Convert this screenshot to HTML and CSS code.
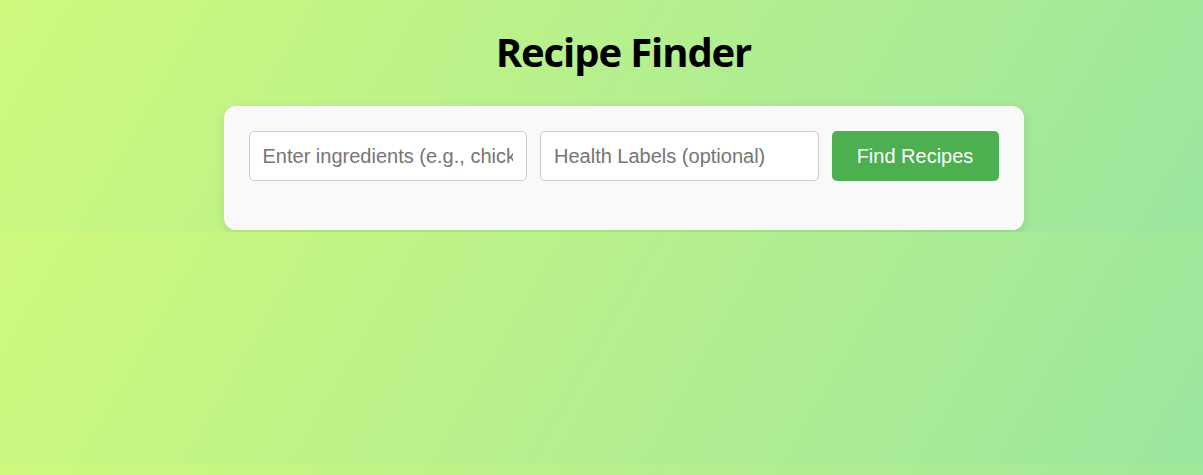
FILE: index.html
```html
<!DOCTYPE html>
<html lang="en">
<head>
<meta charset="utf-8">
<title>Recipe Finder</title>
<link rel="stylesheet" href="styles.css">
</head>
<body>
  <main class="container">
    <h1 class="title">Recipe Finder</h1>
    <section class="card">
      <form class="search-row">
        <input class="field" type="text" placeholder="Enter ingredients (e.g., chicken, rice)">
        <input class="field" type="text" placeholder="Health Labels (optional)">
        <button class="btn" type="button">Find Recipes</button>
      </form>
      <div class="results"></div>
    </section>
  </main>
</body>
</html>
```

FILE: styles.css
```css
body {
  margin: 0;
  padding: 0 0 2px 44px;
  font-family: "Open Sans", "Noto Sans", sans-serif;
  background: linear-gradient(120deg, #cff97d 0%, #9ce69f 100%);
}

.container {
  width: 800px;
  margin: 0 auto;
  padding-top: 1px;
}

.title {
  margin: 24px 0 27px;
  font-size: 40px;
  line-height: 54px;
  font-weight: 700;
  letter-spacing: -1.1px;
  text-align: center;
  color: #000;
}

.card {
  background: #f9f9f9;
  border-radius: 12px;
  padding: 25px;
  box-shadow: 0 4px 12px rgba(0, 0, 0, 0.1);
}

.search-row {
  display: flex;
  gap: 13px;
  margin: 0;
}

.field {
  flex: 1;
  min-width: 0;
  height: 50px;
  box-sizing: border-box;
  padding: 0 13px;
  border: 1px solid #ccc;
  border-radius: 5px;
  background: #fff;
  font-family: "Liberation Sans", Arial, sans-serif;
  font-size: 20px;
  color: #333;
}

.field::placeholder {
  color: #757575;
}

.btn {
  flex: 0 0 167px;
  height: 50px;
  border: none;
  border-radius: 5px;
  background: #4caf50;
  color: #fff;
  font-family: "Liberation Sans", Arial, sans-serif;
  font-size: 20px;
  cursor: pointer;
}

.results {
  margin-top: 24px;
}
```
